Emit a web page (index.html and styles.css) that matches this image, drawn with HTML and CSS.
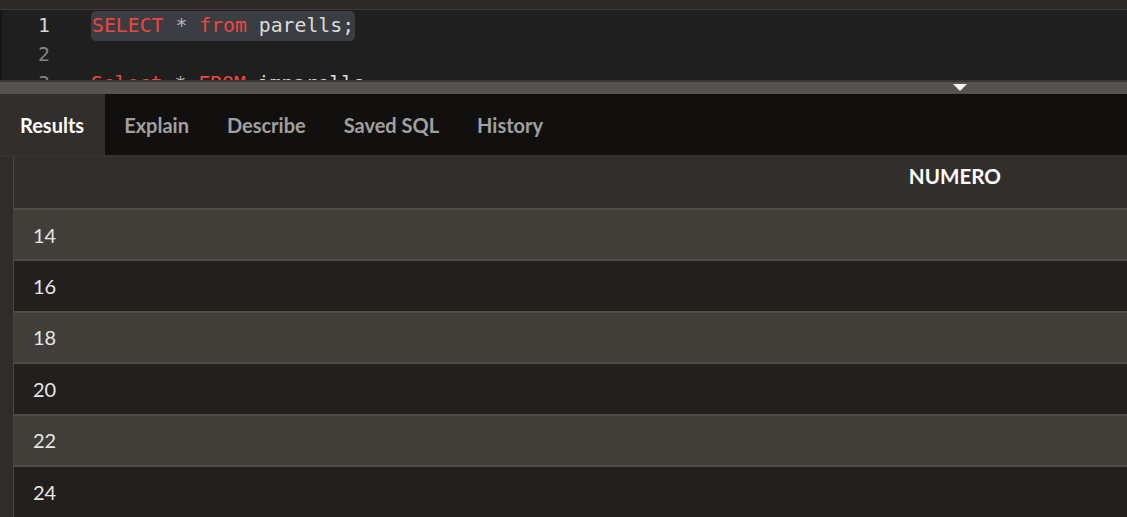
FILE: index.html
```html
<!DOCTYPE html>
<html>
<head>
<meta charset="utf-8">
<link rel="stylesheet" href="styles.css">
</head>
<body>
<div class="topbar"></div>
<div class="editor">
  <div class="line"><span class="ln active">1</span><span class="code"><span class="hl"><span class="kw">SELECT</span> <span class="op">*</span> <span class="kw">from</span> parells;</span></span></div>
  <div class="line"><span class="ln">2</span><span class="code"></span></div>
  <div class="line"><span class="ln">3</span><span class="code"><span class="kw">Select</span> <span class="op">*</span> <span class="kw">FROM</span> imparells;</span></div>
</div>
<div class="splitter"><span class="tri"></span></div>
<div class="tabs">
  <div class="tab active">Results</div>
  <div class="tab">Explain</div>
  <div class="tab">Describe</div>
  <div class="tab">Saved SQL</div>
  <div class="tab">History</div>
</div>
<div class="sep"></div>
<div class="grid">
  <div class="gutter"></div>
  <div class="table">
    <div class="thead">NUMERO</div>
    <div class="row odd">14</div>
    <div class="row even">16</div>
    <div class="row odd">18</div>
    <div class="row even">20</div>
    <div class="row odd">22</div>
    <div class="row even">24</div>
  </div>
</div>
</body>
</html>
```
FILE: styles.css
```css
html, body {
  margin: 0;
  padding: 0;
}
body {
  width: 1127px;
  height: 517px;
  overflow: hidden;
  background: #1f1f1f;
  display: flex;
  flex-direction: column;
  font-family: Lato, "Noto Sans", sans-serif;
}
.topbar {
  height: 9px;
  flex: none;
  background: #2c2926;
  border-bottom: 1px solid #3b3835;
}
.editor {
  height: 70px;
  flex: none;
  overflow: hidden;
  background: #1f1f1f;
  border-left: 2px solid #161616;
  padding-top: 1px;
  box-sizing: border-box;
  font-family: "DejaVu Sans Mono", monospace;
  font-size: 19.8px;
  color: #dcdcdc;
}
.line {
  display: flex;
  height: 29px;
  line-height: 29px;
  white-space: pre;
}
.ln {
  width: 48px;
  text-align: right;
  color: #858585;
  flex: none;
}
.ln.active {
  color: #d6d6d6;
}
.code {
  padding-left: 41px;
}
.hl {
  display: inline-block;
  background: #3a3d42;
  border-radius: 5px;
  line-height: 30px;
  margin-top: -1px;
  padding: 0 1px;
}
.kw {
  color: #f0453f;
}
.op {
  color: #b8b8b8;
}
.splitter {
  height: 12px;
  flex: none;
  background: #57524d;
  border-top: 2px solid #3a3734;
  padding-left: 953px;
  display: flex;
  align-items: flex-start;
}
.tri {
  margin-top: 2px;
  width: 0;
  height: 0;
  border-left: 7px solid transparent;
  border-right: 7px solid transparent;
  border-top: 7px solid #f2f2f2;
}
.tabs {
  height: 61px;
  flex: none;
  background: #12100e;
  display: flex;
}
.tab {
  display: flex;
  align-items: center;
  padding: 0 19px;
  font-size: 20px;
  font-weight: 700;
  color: #a0a0a0;
}
.tab.active {
  background: #312e2b;
  color: #ffffff;
  padding-left: 20px;
  padding-right: 21px;
}
.sep {
  height: 2px;
  flex: none;
  background: #35322f;
}
.grid {
  flex: 1;
  display: flex;
  min-height: 0;
}
.gutter {
  width: 13px;
  flex: none;
  background: #2f2c29;
  border-right: 1px solid #4a4643;
}
.table {
  flex: 1;
  display: flex;
  flex-direction: column;
}
.thead {
  height: 51px;
  flex: none;
  box-sizing: border-box;
  background: #322e2b;
  display: flex;
  align-items: flex-start;
  justify-content: flex-end;
  padding-top: 7px;
  padding-right: 126px;
  font-size: 20.6px;
  font-weight: 700;
  color: #ffffff;
}
.row {
  height: 49.4px;
  flex: none;
  border-top: 2px solid #4f4b47;
  display: flex;
  align-items: center;
  padding-left: 19px;
  font-size: 20px;
  color: #e6e6e6;
}
.row.odd {
  background: #413e3a;
}
.row.even {
  background: #221f1d;
}
```
